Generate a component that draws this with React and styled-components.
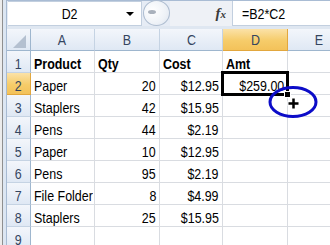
import styled, { createGlobalStyle } from 'styled-components'

const FONT = `"Liberation Sans", Arial, sans-serif`

const GlobalStyle = createGlobalStyle`
  html, body {
    margin: 0;
    padding: 0;
    background: #ffffff;
  }
  body {
    font-family: ${FONT};
  }
`

const columns = ['A', 'B', 'C', 'D', 'E']

const rows = [
  ['Product', 'Qty', 'Cost', 'Amt'],
  ['Paper', '20', '$12.95', '$259.00'],
  ['Staplers', '42', '$15.95', ''],
  ['Pens', '44', '$2.19', ''],
  ['Paper', '10', '$12.95', ''],
  ['Pens', '95', '$2.19', ''],
  ['File Folder', '8', '$4.99', ''],
  ['Staplers', '25', '$15.95', ''],
  ['', '', '', ''],
]

// the screenshot is squeezed sideways, so every text is drawn narrower
function T({ children, origin = 'left' }) {
  if (!children) return null
  return <Txt $origin={origin}>{children}</Txt>
}

export default function App() {
  return (
    <>
      <GlobalStyle />
      <Window>
        <LeftFrame />
        <Main>
          <TopBar />
          <FormulaRow>
            <NameBox>
              <NameText><T origin="center">D2</T></NameText>
              <DropArrow />
            </NameBox>
            <Grip>
              <GripDot />
            </Grip>
            <FxArea>
              <Fx>f<small>x</small></Fx>
            </FxArea>
            <FormulaInput><T>=B2*C2</T></FormulaInput>
          </FormulaRow>

          <Sheet>
            <Corner>
              <svg width="24" height="22" viewBox="0 0 24 22">
                <polygon points="19,6 19,19 6,19" fill="#b4c0d0" />
              </svg>
            </Corner>
            {columns.map((c) => (
              <ColHead key={c} $active={c === 'D'}>
                <T origin="center">{c}</T>
              </ColHead>
            ))}

            {rows.map((r, i) => {
              const n = i + 1
              const head = n === 1
              return [
                <RowHead key={`h${n}`} $active={n === 2}>
                  <T origin="center">{String(n)}</T>
                </RowHead>,
                <Cell key={`a${n}`} $bold={head}><T>{r[0]}</T></Cell>,
                <Cell key={`b${n}`} $bold={head} $right={!head}>
                  <T origin={head ? 'left' : 'right'}>{r[1]}</T>
                </Cell>,
                <Cell key={`c${n}`} $bold={head} $right={!head}>
                  <T origin={head ? 'left' : 'right'}>{r[2]}</T>
                </Cell>,
                n === 2 ? (
                  <Cell key={`d${n}`} $right $selected>
                    <T origin="right">{r[3]}</T>
                    <FillHandle />
                  </Cell>
                ) : (
                  <Cell key={`d${n}`} $bold={head}><T>{r[3]}</T></Cell>
                ),
                <Cell key={`e${n}`} />,
              ]
            })}
          </Sheet>

          <Marker width="54" height="38" viewBox="0 0 54 38">
            <ellipse cx="25" cy="18" rx="23" ry="14.5" fill="none" stroke="#0c0cc8" strokeWidth="3" />
            <path d="M25.5 13.5 V25.5 M19.5 19.5 H31.5" stroke="#ffffff" strokeWidth="5" />
            <path d="M25.5 14.5 V24.5 M20.5 19.5 H30.5" stroke="#000000" strokeWidth="2.5" />
          </Marker>
        </Main>
      </Window>
    </>
  )
}

const Txt = styled.span`
  display: inline-block;
  flex-shrink: 0;
  transform: scaleX(0.83);
  transform-origin: ${(p) => p.$origin} bottom;
`

const Window = styled.div`
  display: flex;
  width: 330px;
  height: 245px;
  overflow: hidden;
  background: #ffffff;
`

const LeftFrame = styled.div`
  flex: 0 0 7px;
  background: linear-gradient(
    to right,
    #ececec 0 2px,
    #8f8f8f 2px 3px,
    #dce6f2 3px 6px,
    #a7bad2 6px 7px
  );
`

const Main = styled.div`
  position: relative;
  flex: 1;
  display: flex;
  flex-direction: column;
  min-width: 0;
  background: #dfe7f1;
`

const TopBar = styled.div`
  height: 4px;
  background: linear-gradient(#cdd9e9, #b9c9de);
  border-bottom: 1px solid #a9bcd4;
  box-sizing: border-box;
`

const FormulaRow = styled.div`
  display: flex;
  align-items: stretch;
  height: 25px;
  margin-bottom: 3px;
  background: #e6ecf5;
`

const NameBox = styled.div`
  display: flex;
  align-items: center;
  width: 134px;
  margin-left: 1px;
  background: #ffffff;
  border: 1px solid #c2cfdf;
  border-left: none;
  box-sizing: border-box;
`

const NameText = styled.span`
  flex: 1;
  display: flex;
  justify-content: center;
  font-size: 15px;
  color: #000;
  padding-left: 6px;
`

const DropArrow = styled.span`
  width: 0;
  height: 0;
  margin-right: 7px;
  border-left: 4px solid transparent;
  border-right: 4px solid transparent;
  border-top: 4px solid #000;
`

const Grip = styled.div`
  flex: 0 0 27px;
  height: 26px;
  margin: -1px 0 0 1px;
  border-radius: 50%;
  border: 1px solid #aebdd0;
  box-sizing: border-box;
  background: radial-gradient(circle at 35% 40%, #ffffff 0%, #eef2f7 60%, #dbe3ee 100%);
  display: flex;
  align-items: center;
  padding-left: 4px;
`

const GripDot = styled.span`
  width: 8px;
  height: 4px;
  border-radius: 50%;
  background: #a9b1bc;
  margin-top: -2px;
`

const FxArea = styled.div`
  flex: 0 0 62px;
  display: flex;
  align-items: center;
  justify-content: flex-end;
  padding-right: 6px;
  box-sizing: border-box;
  background: #eef1f6;
`

const Fx = styled.span`
  font-family: "Liberation Serif", "Times New Roman", serif;
  font-style: italic;
  font-weight: bold;
  font-size: 15px;
  color: #3a3a3a;

  small {
    font-size: 11px;
  }
`

const FormulaInput = styled.div`
  flex: 1;
  display: flex;
  align-items: center;
  padding-left: 9px;
  background: #ffffff;
  border-left: 1px solid #c2cfdf;
  border-bottom: 1px solid #c2cfdf;
  font-size: 15px;
  color: #000;
`

const Sheet = styled.div`
  display: grid;
  grid-template-columns: 24px 64px 65px 63px 65px 64px;
  grid-auto-rows: 22px;
  background: #ffffff;
  font-size: 15px;
  line-height: 17px;
`

const headBg = `linear-gradient(#f3f6fb, #dfe8f4)`
const activeBg = `linear-gradient(#fbe2a8, #f6cc6a 55%, #f3c25a)`

const Corner = styled.div`
  background: ${headBg};
  border-right: 1px solid #9eb6ce;
  border-bottom: 1px solid #9eb6ce;
  box-sizing: border-box;

  svg {
    display: block;
  }
`

const ColHead = styled.div`
  display: flex;
  align-items: center;
  justify-content: center;
  background: ${(p) => (p.$active ? activeBg : headBg)};
  border-right: 1px solid ${(p) => (p.$active ? '#e2a73e' : '#c5d3e3')};
  border-bottom: 1px solid ${(p) => (p.$active ? '#e2a73e' : '#9eb6ce')};
  box-sizing: border-box;
  color: #34455f;
`

const RowHead = styled.div`
  display: flex;
  align-items: flex-end;
  justify-content: center;
  background: ${(p) => (p.$active ? activeBg : headBg)};
  border-right: 1px solid ${(p) => (p.$active ? '#e2a73e' : '#9eb6ce')};
  border-bottom: 1px solid ${(p) => (p.$active ? '#e2a73e' : '#c5d3e3')};
  box-sizing: border-box;
  color: #34455f;
`

const Cell = styled.div`
  position: ${(p) => (p.$selected ? 'relative' : 'static')};
  display: flex;
  align-items: flex-end;
  justify-content: ${(p) => (p.$right ? 'flex-end' : 'flex-start')};
  padding: 0 3px 0 3px;
  border-right: 1px solid #d9dce1;
  border-bottom: 1px solid #d9dce1;
  box-sizing: border-box;
  overflow: ${(p) => (p.$selected ? 'visible' : 'hidden')};
  white-space: nowrap;
  color: #000;
  font-weight: ${(p) => (p.$bold ? 'bold' : 'normal')};

  ${(p) =>
    p.$selected &&
    `
    &::after {
      content: '';
      position: absolute;
      top: -2px;
      left: -2px;
      right: -2px;
      bottom: -2px;
      border: 3px solid #000;
      pointer-events: none;
    }
  `}
`

const FillHandle = styled.span`
  position: absolute;
  right: -4px;
  bottom: -4px;
  width: 5px;
  height: 5px;
  background: #000;
  border: 1px solid #fff;
  z-index: 2;
`

const Marker = styled.svg`
  position: absolute;
  left: 261px;
  top: 84px;
  z-index: 3;
`
